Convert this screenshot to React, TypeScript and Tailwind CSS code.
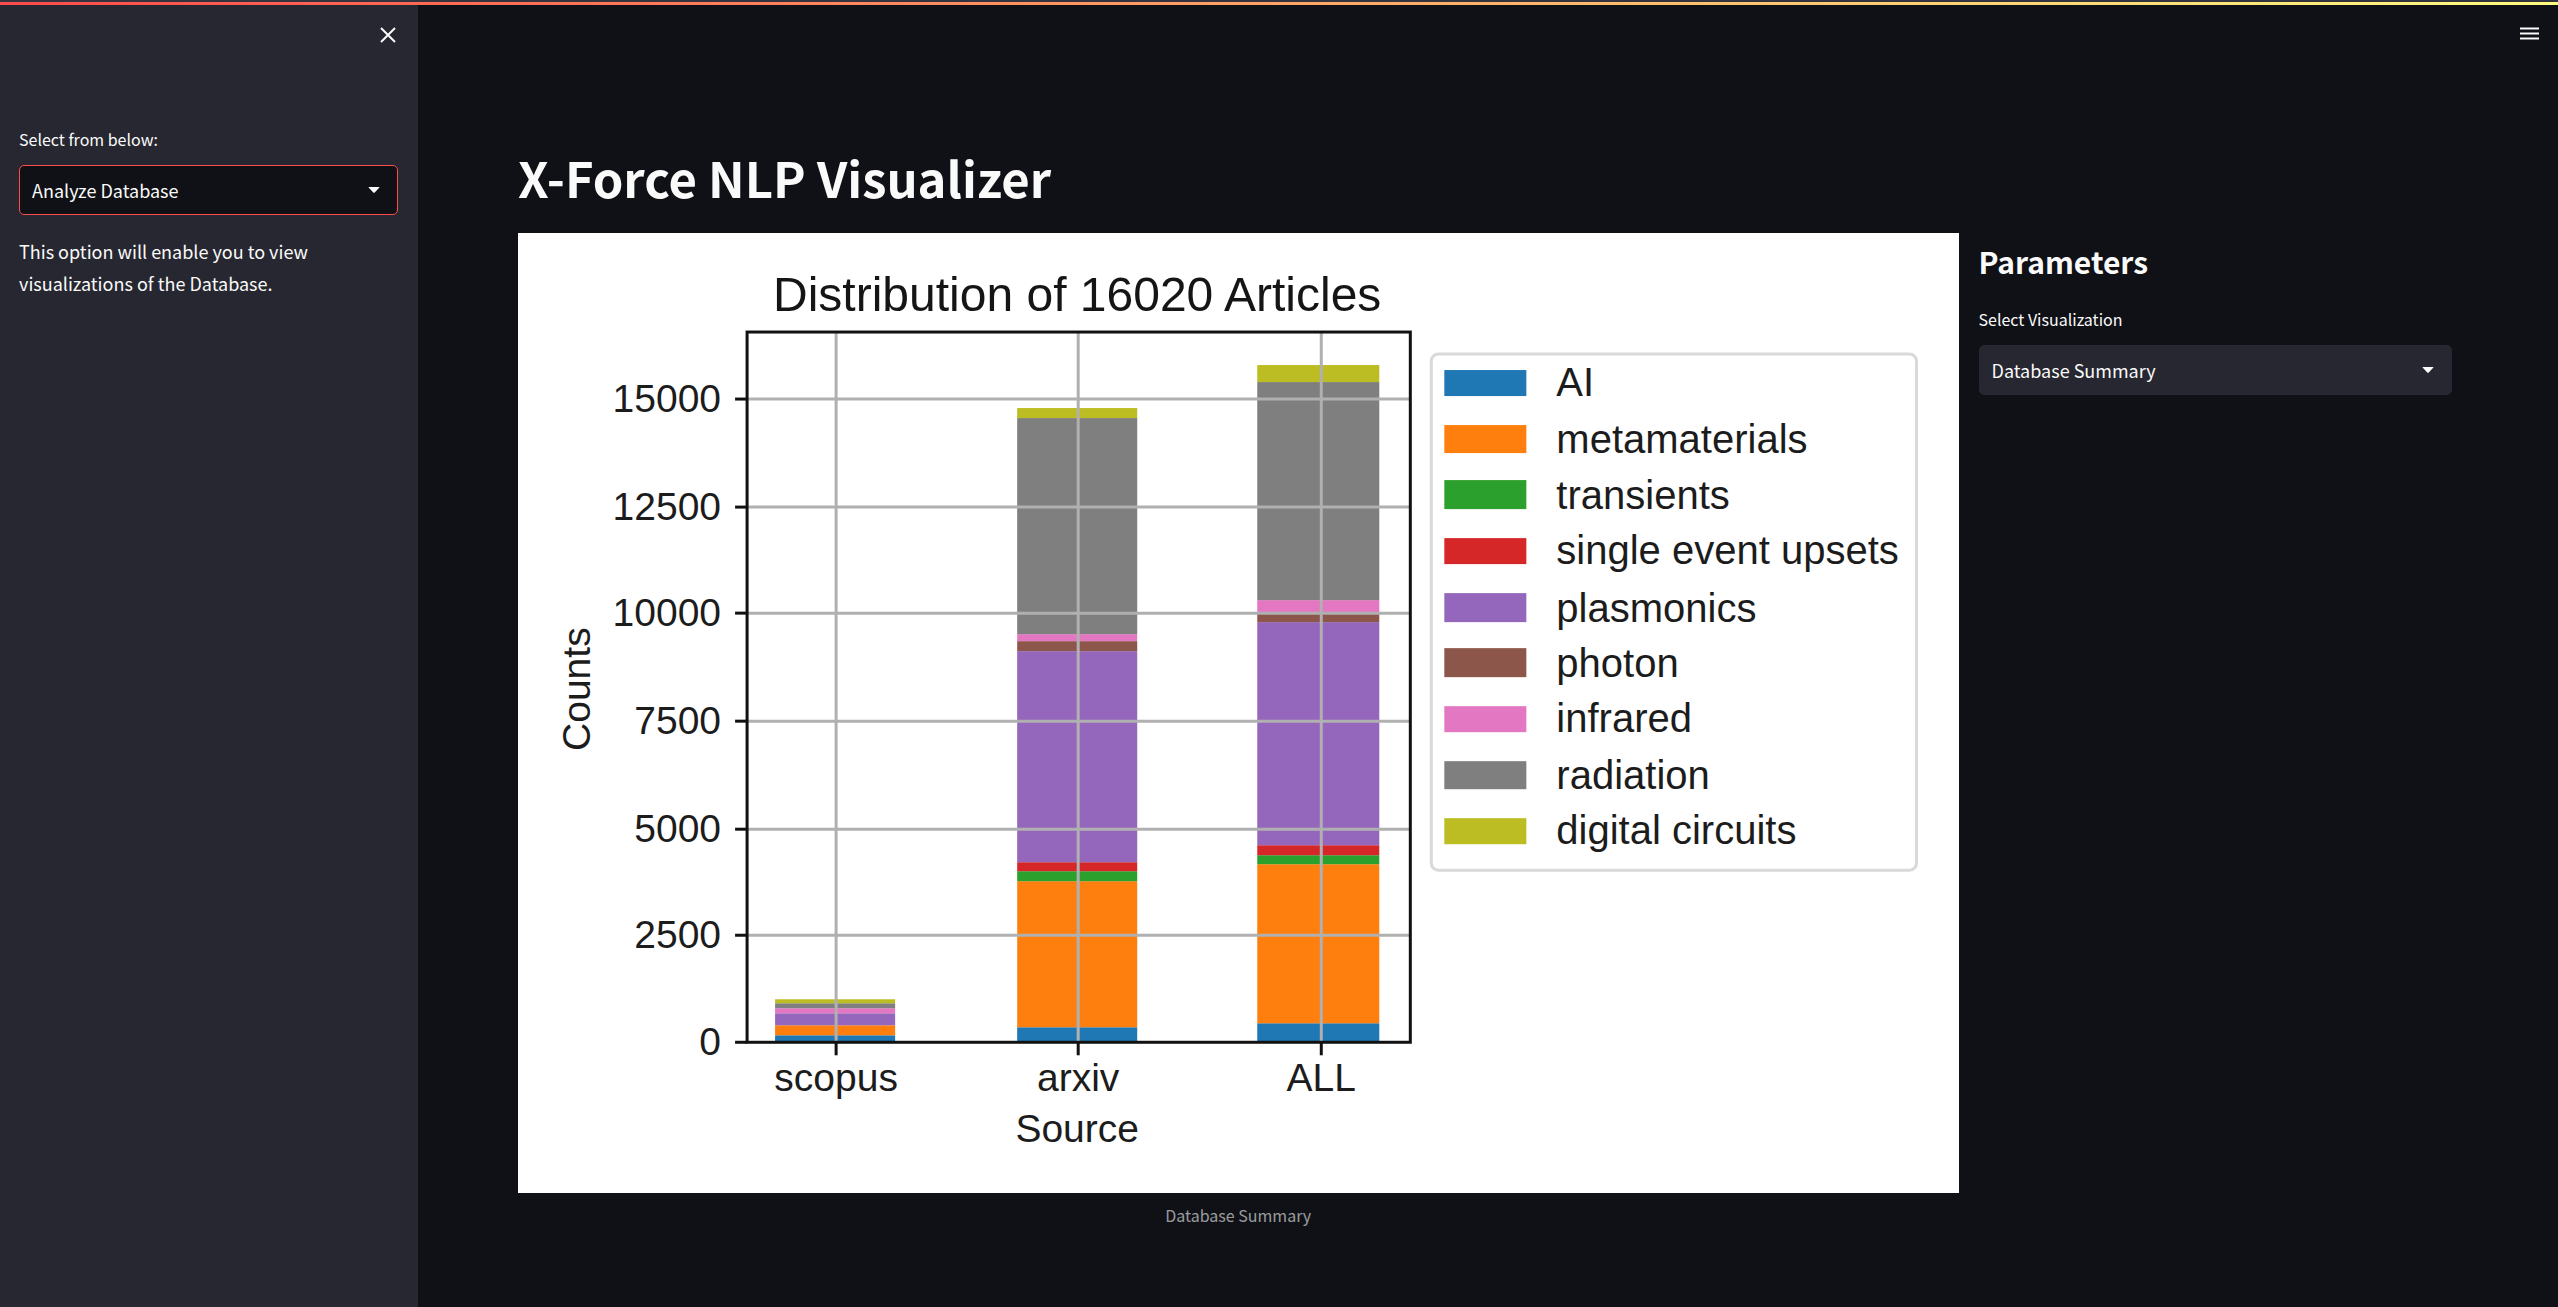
import { useId } from "react";
import type { ReactNode } from "react";

type Bar = { name: string; x: number; width: number; tick: number; edges: number[] };

const SERIES = [
  { name: "AI", color: "#1f77b4", top: 137, bottom: 163 },
  { name: "metamaterials", color: "#ff7f0e", top: 192, bottom: 220 },
  { name: "transients", color: "#2ca02c", top: 247, bottom: 276 },
  { name: "single event upsets", color: "#d62728", top: 305, bottom: 331 },
  { name: "plasmonics", color: "#9467bd", top: 360, bottom: 389 },
  { name: "photon", color: "#8c564b", top: 415, bottom: 444 },
  { name: "infrared", color: "#e377c2", top: 473, bottom: 499 },
  { name: "radiation", color: "#7f7f7f", top: 528, bottom: 556 },
  { name: "digital circuits", color: "#bcbd22", top: 585, bottom: 611 },
];

// Stack boundaries from the axis upwards, one pair of neighbours per series.
const BARS: Bar[] = [
  { name: "scopus", x: 257, width: 120, tick: 318, edges: [809, 802, 792, 792, 792, 780, 780, 775, 770, 766] },
  { name: "arxiv", x: 499, width: 120, tick: 560, edges: [809, 794, 648, 638, 629, 418, 408, 401, 185, 175] },
  { name: "ALL", x: 739, width: 122, tick: 803, edges: [809, 790, 631, 622, 612, 389, 380, 367, 149, 132] },
];

const Y_TICKS = [
  { label: "0", y: 809 },
  { label: "2500", y: 702 },
  { label: "5000", y: 596 },
  { label: "7500", y: 488 },
  { label: "10000", y: 380 },
  { label: "12500", y: 274 },
  { label: "15000", y: 166 },
];

function ArticleChart() {
  return (
    <svg
      viewBox="0 0 1440 960"
      role="img"
      aria-label="Distribution of 16020 Articles"
      className="block w-full bg-white font-['Liberation_Sans',Arial,sans-serif] text-[40px]"
    >
      <text x="559" y="78" textAnchor="middle" fill="#151515" className="text-[48px]">
        Distribution of 16020 Articles
      </text>

      {BARS.map((bar) =>
        SERIES.map((s, i) => (
          <rect
            key={bar.name + s.name}
            x={bar.x}
            y={bar.edges[i + 1]}
            width={bar.width}
            height={bar.edges[i] - bar.edges[i + 1]}
            fill={s.color}
          />
        )),
      )}

      <g stroke="#b0b0b0" strokeWidth="3">
        {Y_TICKS.slice(1).map((t) => (
          <line key={t.label} x1="230" x2="891" y1={t.y} y2={t.y} />
        ))}
        {BARS.map((b) => (
          <line key={b.name} x1={b.tick} x2={b.tick} y1="100" y2="809" />
        ))}
      </g>

      <g stroke="#111" strokeWidth="3">
        {Y_TICKS.map((t) => (
          <line key={t.label} x1="217" x2="229" y1={t.y} y2={t.y} />
        ))}
        {BARS.map((b) => (
          <line key={b.name} x1={b.tick} x2={b.tick} y1="809" y2="822" />
        ))}
        <rect x="229" y="99" width="663" height="710" fill="none" />
      </g>

      <g fill="#1c1c1c" className="text-[39px]">
        {Y_TICKS.map((t) => (
          <text key={t.label} x="203" y={t.y + 13} textAnchor="end">
            {t.label}
          </text>
        ))}
        {BARS.map((b) => (
          <text key={b.name} x={b.tick} y="858" textAnchor="middle">
            {b.name}
          </text>
        ))}
        <text x="559" y="909" textAnchor="middle">
          Source
        </text>
        <text transform="translate(72 456) rotate(-90)" textAnchor="middle">
          Counts
        </text>
      </g>

      <rect x="913" y="121" width="485" height="516" rx="7" fill="#fff" stroke="#d9d9d9" strokeWidth="3" />
      {SERIES.map((s) => (
        <g key={s.name}>
          <rect x="926" y={s.top} width="82" height={s.bottom - s.top} fill={s.color} />
          <text x="1038" y={s.bottom} fill="#1c1c1c">
            {s.name}
          </text>
        </g>
      ))}
    </svg>
  );
}

function SelectBox({
  label,
  value,
  focused = false,
}: {
  label: string;
  value: string;
  focused?: boolean;
}) {
  const id = useId();
  return (
    <div>
      <label htmlFor={id} className="mb-3 block text-base leading-7">
        {label}
      </label>
      <div className="relative">
        <select
          id={id}
          defaultValue={value}
          className={
            focused
              ? "block h-[50px] w-full appearance-none rounded-[5px] border border-[#ff4b4b] bg-[#0f1116] px-3 text-lg outline-none"
              : "block h-[50px] w-full appearance-none rounded-[5px] border border-[#262730] bg-[#262730] px-3 text-lg outline-none"
          }
        >
          <option>{value}</option>
        </select>
        <svg
          viewBox="0 0 12 6"
          className="pointer-events-none absolute top-[22px] right-[18px] h-1.5 w-3"
          aria-hidden="true"
        >
          <path d="M1 0h10q.8 0 .2.7L6.7 5.6q-.7.7-1.4 0L.8.7Q.2 0 1 0z" fill="#fafafa" />
        </svg>
      </div>
    </div>
  );
}

function IconButton({ label, className, children }: { label: string; className: string; children: ReactNode }) {
  return (
    <button type="button" aria-label={label} className={className}>
      {children}
    </button>
  );
}

export default function App() {
  return (
    <div className="flex min-h-screen flex-col bg-[#0f1116] font-['Noto_Sans_CJK_JP','Noto_Sans_CJK_SC',sans-serif] text-[#fafafa]">
      <div className="h-[5px] border-t-2 border-[#33343f] bg-linear-to-r/srgb from-[#ff4b4b] to-[#fffd80] bg-origin-content" />
      <div className="flex flex-1">
        <aside className="w-[418px] shrink-0 bg-[#262730] pr-5 pl-[19px]">
          <div className="flex h-[120px] justify-end">
            <IconButton label="Close sidebar" className="mt-5 h-5 w-5">
              <svg viewBox="0 0 20 20" className="h-5 w-5" aria-hidden="true">
                <path d="M3 3l14 14M17 3l-14 14" stroke="#fafafa" strokeWidth="2" fill="none" />
              </svg>
            </IconButton>
          </div>
          <SelectBox label="Select from below:" value="Analyze Database" focused />
          <p className="mt-5 text-lg leading-8">
            This option will enable you to view visualizations of the Database.
          </p>
        </aside>

        <div className="flex min-w-0 flex-1 flex-col">
          <header className="flex h-[120px] justify-end pr-[18px]">
            <IconButton label="Main menu" className="mt-[18px] h-[22px] w-[22px]">
              <svg viewBox="0 0 22 22" className="h-[22px] w-[22px]" aria-hidden="true">
                <path d="M2 5.5h19M2 10.5h19M2 15.5h19" stroke="#fafafa" strokeWidth="2" fill="none" />
              </svg>
            </IconButton>
          </header>

          <main className="pr-[106px] pl-[100px]">
            <h1 className="pt-5 pb-6 text-[49px] leading-[64px] font-bold">X-Force NLP Visualizer</h1>
            <div className="flex gap-5">
              <figure className="min-w-0 flex-[1_1_calc(75%-20px)]">
                <ArticleChart />
                <figcaption className="mt-2 text-center text-base leading-7 text-[#fafafa]/60">
                  Database Summary
                </figcaption>
              </figure>
              <section className="min-w-0 flex-[1_1_calc(25%-20px)]">
                <h2 className="pt-2 pb-6 text-[30px] leading-10 font-bold">Parameters</h2>
                <SelectBox label="Select Visualization" value="Database Summary" />
              </section>
            </div>
          </main>
        </div>
      </div>
    </div>
  );
}
